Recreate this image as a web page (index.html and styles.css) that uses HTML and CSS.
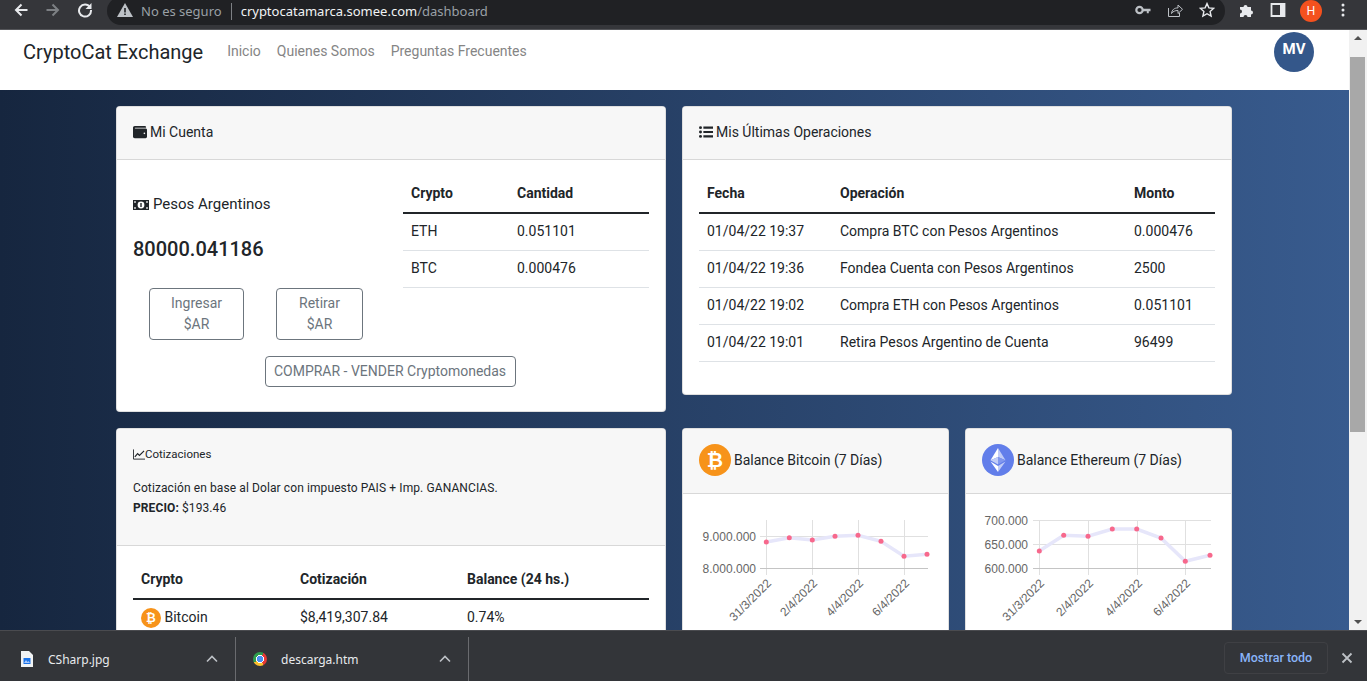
FILE: index.html
```html
<!DOCTYPE html>
<html lang="es">
<head>
    <meta charset="UTF-8">
    <title>CryptoCat Exchange</title>
    <link rel="stylesheet" href="styles.css">
</head>
<body>
    <!-- Barra del navegador -->
    <div class="toolbar">
        <div class="nav-btns">
            <svg class="tb-icon" viewBox="0 0 16 16"><path d="M14.5 8H3M8.5 2.5 3 8l5.5 5.5" fill="none" stroke="#e8eaed" stroke-width="2"/></svg>
            <svg class="tb-icon" viewBox="0 0 16 16"><path d="M1.5 8H13M7.5 2.5 13 8l-5.5 5.5" fill="none" stroke="#7d8084" stroke-width="2"/></svg>
            <svg class="tb-icon" viewBox="0 0 16 16"><path d="M13 5.2A6 6 0 1 0 14 8" fill="none" stroke="#e8eaed" stroke-width="2"/><path d="M14.5 1v6h-6z" fill="#e8eaed"/></svg>
        </div>
        <div class="omnibox">
            <svg class="warn" viewBox="0 0 16 16"><path d="M8 1 16 15H0z" fill="#bdc1c6"/><path d="M7.2 6h1.6v4.5H7.2zM7.2 11.5h1.6v1.6H7.2z" fill="#202124"/></svg>
            <span class="insecure">No es seguro</span>
            <span class="url"><b>cryptocatamarca.somee.com</b>/dashboard</span>
            <div class="omni-icons">
                <svg class="tb-icon" viewBox="0 0 16 16"><circle cx="4.5" cy="8" r="3.2" fill="none" stroke="#bdc1c6" stroke-width="2.2"/><path d="M7 6.8h8.5v2.4h-1.7v2h-2v-2H7z" fill="#bdc1c6"/></svg>
                <svg class="tb-icon" viewBox="0 0 16 16"><path d="M1.5 6v8.5h11V11" fill="none" stroke="#bdc1c6"/><path d="M4.5 11.5c.5-4 3-5.6 6.5-5.6V3l4.5 4.3L11 11.5V8.5c-3 0-5 .8-6.5 3z" fill="none" stroke="#bdc1c6"/></svg>
                <svg class="tb-icon" viewBox="0 0 16 16"><path d="m8 1.6 1.9 4.3 4.7.5-3.5 3.1 1 4.6L8 11.700l-4.100 2.400 1-4.600L1.400 6.400l4.700-.5z" fill="none" stroke="#e8eaed" stroke-width="1.400"/></svg>
            </div>
        </div>
        <div class="tb-right">
            <svg class="tb-icon puzzle" viewBox="0 0 16 16"><path d="M1 5h3.500a2 2 0 1 1 4 0H12v3.500a2 2 0 1 1 0 4V15H8.500a2 2 0 1 0-4 0H1v-3.500a2 2 0 1 0 0-4z" fill="#e8eaed"/></svg>
            <svg class="tb-icon panel" viewBox="0 0 16 16"><path d="M1.500 2h13v12h-13z" fill="none" stroke="#e8eaed" stroke-width="1.800"/><path d="M10 2h4.500v12H10z" fill="#e8eaed"/></svg>
            <span class="profile">H</span>
            <svg class="tb-icon dots" viewBox="0 0 16 16"><circle cx="8" cy="3" r="1.500" fill="#e8eaed"/><circle cx="8" cy="8" r="1.500" fill="#e8eaed"/><circle cx="8" cy="13" r="1.500" fill="#e8eaed"/></svg>
        </div>
    </div>

    <div class="viewport">
        <div class="page">
            <!-- Navegacion -->
            <nav class="navbar">
                <a class="brand">CryptoCat Exchange</a>
                <a class="nav-link">Inicio</a>
                <a class="nav-link">Quienes Somos</a>
                <a class="nav-link">Preguntas Frecuentes</a>
                <span class="avatar">MV</span>
            </nav>

            <main class="content">
                <!-- Mi Cuenta -->
                <section class="card account-card">
                    <div class="card-header">
                        <svg class="fa" viewBox="0 0 512 512"><path d="M461.2 128H80c-8.84 0-16-7.16-16-16s7.16-16 16-16h384c8.84 0 16-7.16 16-16 0-26.51-21.49-48-48-48H64C28.65 32 0 60.65 0 96v320c0 35.35 28.65 64 64 64h397.2c28.02 0 50.8-21.53 50.8-48V176c0-26.47-22.78-48-50.8-48zM416 336c-17.67 0-32-14.33-32-32s14.33-32 32-32 32 14.33 32 32-14.33 32-32 32z"/></svg>
                        Mi Cuenta
                    </div>
                    <div class="card-body">
                        <div class="account-top">
                            <div class="balance">
                                <div class="currency">
                                    <svg class="fa-money" viewBox="0 0 16 12"><path d="M0 1h16v10H0z"/><circle cx="8" cy="6" r="3.400" fill="#fff"/><path d="M7.300 4h1.400v4H7.300z"/><path d="M1.200 2.200h1.600v1.600H1.200zM13.200 2.200h1.600v1.600h-1.600zM1.200 8.200h1.600v1.600H1.200zM13.200 8.200h1.600v1.600h-1.600z" fill="#fff"/></svg>
                                    Pesos Argentinos
                                </div>
                                <div class="amount">80000.041186</div>
                                <div class="btn-row">
                                    <a class="btn btn-in">Ingresar<br>$AR</a>
                                    <a class="btn btn-out">Retirar<br>$AR</a>
                                </div>
                            </div>
                            <table class="table holdings">
                                <thead><tr><th class="col-crypto">Crypto</th><th>Cantidad</th></tr></thead>
                                <tbody>
                                    <tr><td>ETH</td><td>0.051101</td></tr>
                                    <tr><td>BTC</td><td>0.000476</td></tr>
                                </tbody>
                            </table>
                        </div>
                        <div class="trade-row"><a class="btn btn-trade">COMPRAR - VENDER Cryptomonedas</a></div>
                    </div>
                </section>

                <!-- Ultimas operaciones -->
                <section class="card ops-card">
                    <div class="card-header">
                        <svg class="fa" viewBox="0 0 16 14"><circle cx="1.7" cy="2" r="1.7"/><circle cx="1.7" cy="7" r="1.7"/><circle cx="1.7" cy="12" r="1.7"/><path d="M5 .8h11v2.400H5zM5 5.800h11v2.400H5zM5 10.800h11v2.400H5z"/></svg>
                        Mis Últimas Operaciones
                    </div>
                    <div class="card-body">
                        <table class="table ops">
                            <thead><tr><th class="col-date">Fecha</th><th class="col-op">Operación</th><th>Monto</th></tr></thead>
                            <tbody>
                                <tr><td>01/04/22 19:37</td><td>Compra BTC con Pesos Argentinos</td><td>0.000476</td></tr>
                                <tr><td>01/04/22 19:36</td><td>Fondea Cuenta con Pesos Argentinos</td><td>2500</td></tr>
                                <tr><td>01/04/22 19:02</td><td>Compra ETH con Pesos Argentinos</td><td>0.051101</td></tr>
                                <tr><td>01/04/22 19:01</td><td>Retira Pesos Argentino de Cuenta</td><td>96499</td></tr>
                            </tbody>
                        </table>
                    </div>
                </section>

                <!-- Cotizaciones -->
                <section class="card quotes-card">
                    <div class="card-header quotes-header">
                        <div class="quotes-title">
                            <svg class="fa-chart" viewBox="0 0 13 11"><path d="M.5 0v10.500H13" fill="none" stroke="#212529"/><path d="m2 8 3-3.500 2 2L12 1.500" fill="none" stroke="#212529" stroke-width="1.300"/></svg>Cotizaciones
                        </div>
                        <p>Cotización en base al Dolar con impuesto PAIS + Imp. GANANCIAS.</p>
                        <p><b>PRECIO:</b> $193.46</p>
                    </div>
                    <div class="card-body">
                        <table class="table quotes">
                            <thead><tr><th class="col-name">Crypto</th><th class="col-quote">Cotización</th><th>Balance (24 hs.)</th></tr></thead>
                            <tbody>
                                <tr>
                                    <td><span class="coin coin-sm">₿</span> Bitcoin</td>
                                    <td>$8,419,307.84</td>
                                    <td>0.74%</td>
                                </tr>
                            </tbody>
                        </table>
                    </div>
                </section>

                <div class="charts">
                    <section class="card chart-card">
                        <div class="card-header chart-header"><span class="coin">₿</span> Balance Bitcoin (7 Días)</div>
                        <svg class="chart" viewBox="0 0 267 150">
                            <g class="grid">
                                <path d="M84.500 26v55M130.500 26v55M176.500 26v55M222.500 26v55M78 42.500h168"/>
                                <path class="axis" d="M78 74.500h168"/>
                            </g>
                            <polyline class="line" points="84.300,48 107.300,43.700 130.300,46 153,42.300 176,41.300 199,47.300 222,62.300 245,60.300"/>
                            <g class="dots-pts">
                                <circle cx="84.300" cy="48" r="2.500"/><circle cx="107.300" cy="43.700" r="2.500"/><circle cx="130.300" cy="46" r="2.500"/><circle cx="153" cy="42.300" r="2.500"/><circle cx="176" cy="41.300" r="2.500"/><circle cx="199" cy="47.300" r="2.500"/><circle cx="222" cy="62.300" r="2.500"/><circle cx="245" cy="60.300" r="2.500"/>
                            </g>
                            <text class="y-label" x="74" y="46.500">9.000.000</text>
                            <text class="y-label" x="74" y="78.500">8.000.000</text>
                            <text class="x-label" transform="translate(90 90) rotate(-45)">31/3/2022</text>
                            <text class="x-label" transform="translate(136 90) rotate(-45)">2/4/2022</text>
                            <text class="x-label" transform="translate(182 90) rotate(-45)">4/4/2022</text>
                            <text class="x-label" transform="translate(228 90) rotate(-45)">6/4/2022</text>
                        </svg>
                    </section>
                    <section class="card chart-card">
                        <div class="card-header chart-header">
                            <svg class="coin-eth" viewBox="0 0 32 32"><circle cx="16" cy="16" r="16" fill="#627eea"/><path d="M16 4v8.900l7.500 3.300z" fill="#c1ccf7"/><path d="M16 4 8.500 16.200l7.500-3.300z" fill="#fff"/><path d="M16 22v6l7.500-10.400z" fill="#c1ccf7"/><path d="M16 22v6L8.500 17.600z" fill="#fff"/><path d="m16 20.600 7.500-4.400-7.500-3.300z" fill="#8197ee"/><path d="m8.500 16.200 7.500 4.400v-7.700z" fill="#c1ccf7"/></svg>
                            Balance Ethereum (7 Días)
                        </div>
                        <svg class="chart" viewBox="0 0 267 150">
                            <g class="grid">
                                <path d="M74.500 26v55M123.500 26v55M172.500 26v55M220.500 26v55M68 26.500h178M68 50.500h178"/>
                                <path class="axis" d="M68 74.500h178"/>
                            </g>
                            <polyline class="line" points="74.300,57 98.700,41.300 123,42.300 147.300,35 171.700,35 196,44 220.300,67.300 245,61.300"/>
                            <g class="dots-pts">
                                <circle cx="74.300" cy="57" r="2.500"/><circle cx="98.700" cy="41.300" r="2.500"/><circle cx="123" cy="42.300" r="2.500"/><circle cx="147.300" cy="35" r="2.500"/><circle cx="171.700" cy="35" r="2.500"/><circle cx="196" cy="44" r="2.500"/><circle cx="220.300" cy="67.300" r="2.500"/><circle cx="245" cy="61.300" r="2.500"/>
                            </g>
                            <text class="y-label" x="63" y="30.500">700.000</text>
                            <text class="y-label" x="63" y="54.500">650.000</text>
                            <text class="y-label" x="63" y="78.500">600.000</text>
                            <text class="x-label" transform="translate(80 90) rotate(-45)">31/3/2022</text>
                            <text class="x-label" transform="translate(129 90) rotate(-45)">2/4/2022</text>
                            <text class="x-label" transform="translate(178 90) rotate(-45)">4/4/2022</text>
                            <text class="x-label" transform="translate(226 90) rotate(-45)">6/4/2022</text>
                        </svg>
                    </section>
                </div>
            </main>
        </div>

        <!-- Barra de scroll -->
        <div class="scrollbar">
            <span class="arrow-up"></span>
            <div class="thumb"></div>
            <span class="arrow-down"></span>
        </div>
    </div>

    <!-- Barra de descargas -->
    <div class="shelf">
        <div class="download dl-first">
            <svg class="file-icon" viewBox="0 0 12 16"><path d="M0 0h8l4 4v12H0z" fill="#f1f3f4"/><path d="M2.500 7h7v6h-7z" fill="#1a73e8"/><path d="m3 12 2-3 1.500 2 1-1 1.500 2z" fill="#a8c7fa"/></svg>
            <span class="dl-name">CSharp.jpg</span>
            <svg class="chev" viewBox="0 0 12 8"><path d="M1 6.500 6 1.500l5 5" fill="none" stroke="#bdc1c6" stroke-width="1.600"/></svg>
        </div>
        <div class="download">
            <span class="chrome-icon"></span>
            <span class="dl-name">descarga.htm</span>
            <svg class="chev" viewBox="0 0 12 8"><path d="M1 6.500 6 1.500l5 5" fill="none" stroke="#bdc1c6" stroke-width="1.600"/></svg>
        </div>
        <a class="show-all">Mostrar todo</a>
        <svg class="shelf-close" viewBox="0 0 12 12"><path d="m1.500 1.500 9 9M10.500 1.500l-9 9" stroke="#bdc1c6" stroke-width="1.800"/></svg>
    </div>
</body>
</html>
```

FILE: styles.css
```css
* {
    box-sizing: border-box;
}
html, body {
    margin: 0;
    height: 681px;
    overflow: hidden;
}
body {
    display: flex;
    flex-direction: column;
    font-family: Roboto, Arial, sans-serif;
    font-size: 14px;
    line-height: 21px;
    color: #212529;
    background-color: #fff;
}

/* Barra del navegador */
.toolbar {
    height: 30px;
    flex-shrink: 0;
    display: flex;
    align-items: flex-start;
    background-color: #35363a;
    border-bottom: 1px solid #55565a;
    font-family: "Noto Sans", Arial, sans-serif;
}
.tb-icon {
    width: 16px;
    height: 16px;
    display: block;
}
.nav-btns {
    width: 107px;
    padding: 2px 0 0 13px;
    display: flex;
    gap: 16px;
}
.omnibox {
    width: 1118px;
    height: 28px;
    margin-top: -3px;
    padding-left: 10px;
    border-radius: 14px;
    background-color: #202124;
    display: flex;
    align-items: center;
    font-size: 13px;
}
.warn {
    width: 16px;
    height: 16px;
    margin-bottom: 2px;
}
.insecure {
    margin: 1px 0 0 8px;
    padding-right: 9px;
    border-right: 1px solid #7d8084;
    line-height: 17px;
    color: #9aa0a6;
}
.url {
    margin: 1px 0 0 9px;
    color: #9aa0a6;
}
.url b {
    font-weight: 400;
    color: #f1f3f4;
}
.omni-icons {
    margin: 0 10px 2px auto;
    display: flex;
    gap: 16px;
}
.tb-right {
    flex: 1;
    position: relative;
    height: 29px;
}
.tb-right .puzzle,
.tb-right .panel,
.tb-right .dots {
    position: absolute;
    top: 2px;
}
.puzzle { left: 14px; }
.panel { left: 45px; }
.dots { left: 110px; }
.profile {
    position: absolute;
    left: 75px;
    top: 0;
    width: 22px;
    height: 22px;
    border-radius: 50%;
    background-color: #f4511e;
    color: #fff;
    font-size: 12px;
    line-height: 22px;
    text-align: center;
}

/* Pagina */
.viewport {
    height: 600px;
    flex-shrink: 0;
    display: flex;
    overflow: hidden;
}
.page {
    flex: 1;
    overflow: hidden;
    background: linear-gradient(to right, #16263f, #385b8e);
}
.navbar {
    height: 60px;
    padding: 0 35px 16px 23px;
    display: flex;
    align-items: center;
    background-color: #fff;
}
.brand {
    margin-right: 16px;
    font-size: 20px;
    line-height: 30px;
    color: #212529;
}
.nav-link {
    padding: 0 8px;
    margin-bottom: 2px;
    color: #858585;
}
.avatar {
    margin-left: auto;
    width: 40px;
    height: 40px;
    border-radius: 50%;
    background-color: #34578a;
    color: #fff;
    font-weight: 700;
    font-size: 15px;
    line-height: 34px;
    text-align: center;
}
.content {
    padding: 16px 117px 0 116px;
    display: grid;
    grid-template-columns: 550px 550px;
    gap: 16px;
    align-items: start;
}
.card {
    background-color: #fff;
    border: 1px solid rgba(0, 0, 0, .125);
    border-radius: 4px;
    overflow: hidden;
}
.card-header {
    height: 53px;
    padding: 0 16px 2px;
    display: flex;
    align-items: center;
    gap: 3px;
    background-color: #f7f7f7;
    border-bottom: 1px solid rgba(0, 0, 0, .125);
}
.card-body {
    padding: 15px 16px 16px;
}
.fa {
    width: 14px;
    height: 14px;
    fill: #212529;
}

/* Tablas */
.table {
    border-collapse: collapse;
    width: 100%;
    margin-bottom: 16px;
}
.table th {
    padding: 8px;
    text-align: left;
    font-weight: 700;
    border-bottom: 2px solid #212529;
}
.table td {
    padding: 7px 8px 8px;
    border-bottom: 1px solid #dee2e6;
}
.col-crypto { width: 106px; }
.col-date { width: 133px; }
.col-op { width: 294px; }
.col-name { width: 159px; }
.col-quote { width: 167px; }

/* Mi Cuenta */
.account-top {
    display: flex;
    gap: 16px;
}
.balance {
    width: 254px;
    flex-shrink: 0;
    padding-top: 19px;
}
.currency {
    display: flex;
    align-items: center;
    gap: 4px;
    font-size: 15px;
}
.fa-money {
    width: 16px;
    height: 12px;
    fill: #212529;
}
.amount {
    margin-top: 19px;
    font-size: 20px;
    line-height: 30px;
    font-weight: 500;
}
.btn-row {
    margin-top: 24px;
    padding-left: 16px;
    display: flex;
    gap: 32px;
}
.btn {
    display: block;
    border: 1px solid #6c757d;
    border-radius: 4px;
    color: #6c757d;
    text-align: center;
}
.btn-in,
.btn-out {
    padding: 4px 0;
    height: 52px;
}
.btn-in { width: 95px; }
.btn-out { width: 87px; }
.holdings {
    width: 246px;
    margin-bottom: 0;
    align-self: flex-start;
}
.trade-row {
    margin-top: 16px;
    margin-bottom: 8px;
    padding-right: 2px;
    display: flex;
    justify-content: center;
}
.btn-trade {
    width: 251px;
    height: 31px;
    line-height: 29px;
}

/* Cotizaciones */
.quotes-header {
    height: 117px;
    display: block;
    padding-top: 15px;
    font-size: 12px;
    line-height: 20px;
    letter-spacing: .1px;
}
.quotes-header p {
    margin: 0;
}
.quotes-title {
    display: flex;
    align-items: center;
    margin-bottom: 14px;
    font-size: 11.5px;
    letter-spacing: 0;
}
.fa-chart {
    width: 12px;
    height: 11px;
}
.coin {
    display: inline-flex;
    align-items: center;
    justify-content: center;
    width: 32px;
    height: 32px;
    border-radius: 50%;
    background-color: #f7931a;
    color: #fff;
    font-family: "DejaVu Sans", sans-serif;
    font-size: 20px;
    font-weight: 700;
    line-height: 1;
}
.coin-sm {
    width: 20px;
    height: 20px;
    margin: -2px 0;
    font-size: 12px;
    vertical-align: middle;
}
.coin-eth {
    width: 32px;
    height: 32px;
}

/* Graficos */
.charts {
    display: grid;
    grid-template-columns: 267px 267px;
    gap: 16px;
}
.chart-header {
    height: 65px;
}
.chart {
    display: block;
    width: 267px;
    height: 150px;
    margin-left: -1px;
}
.grid path {
    fill: none;
    stroke: #e0e0e0;
    stroke-width: 1;
}
.grid .axis {
    stroke: #c4c4c4;
}
.line {
    fill: none;
    stroke: #e6e6fa;
    stroke-width: 3.5;
}
.dots-pts circle {
    fill: #f7688c;
}
.y-label,
.x-label {
    font-family: "Liberation Sans", Arial, sans-serif;
    font-size: 12px;
    fill: #666;
    text-anchor: end;
}

/* Scroll */
.scrollbar {
    width: 18px;
    flex-shrink: 0;
    position: relative;
    background-color: #f1f1f1;
}
.thumb {
    position: absolute;
    left: 1px;
    right: 2px;
    top: 27px;
    height: 375px;
    background-color: #a8a8a8;
}
.arrow-up,
.arrow-down {
    position: absolute;
    left: 5px;
    border-left: 4px solid transparent;
    border-right: 4px solid transparent;
}
.arrow-up {
    top: 6px;
    border-bottom: 4px solid #505050;
}
.arrow-down {
    bottom: 6px;
    border-top: 4px solid #505050;
}

/* Descargas */
.shelf {
    height: 51px;
    flex-shrink: 0;
    display: flex;
    align-items: stretch;
    background-color: #333539;
    border-top: 1px solid #4a4b4f;
    color: #e8eaed;
    font-family: "Noto Sans", Arial, sans-serif;
    font-size: 12px;
}
.download {
    width: 233px;
    margin-top: 6px;
    padding: 0 17px;
    display: flex;
    align-items: center;
    border-right: 1px solid #6a6b6f;
}
.dl-first {
    width: 236px;
    padding-left: 21px;
}
.file-icon {
    width: 12px;
    height: 16px;
    margin-right: 15px;
}
.chrome-icon {
    width: 14px;
    height: 14px;
    margin-right: 14px;
    border-radius: 50%;
    background:
        radial-gradient(circle, #4a90f0 0 3px, #fff 3px 4px, transparent 4px),
        conic-gradient(from 30deg, #e53935 0 120deg, #fbc02d 120deg 210deg, #2e9e4f 210deg 360deg);
}
.dl-name {
    flex: 1;
}
.chev {
    width: 12px;
    height: 8px;
}
.show-all {
    margin: 11px 0 7px auto;
    width: 104px;
    border: 1px solid #3f4044;
    border-radius: 4px;
    line-height: 30px;
    text-align: center;
    color: #8ab4f8;
    font-family: Roboto, Arial, sans-serif;
    font-weight: 500;
    font-size: 12.5px;
}
.shelf-close {
    width: 12px;
    height: 12px;
    margin: 21px 14px 0 13px;
}
```
